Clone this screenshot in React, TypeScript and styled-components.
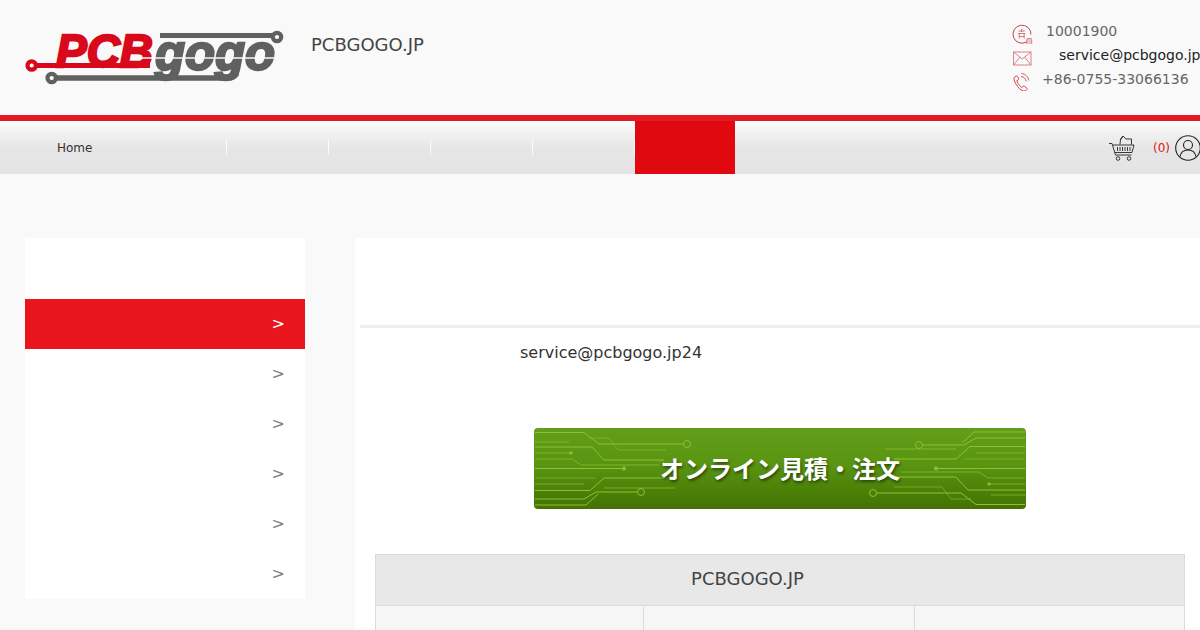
import styled, { createGlobalStyle } from 'styled-components';

const GlobalStyle = createGlobalStyle`
    html, body {
        margin: 0;
        padding: 0;
        height: 630px;
        overflow: hidden;
        background: #f9f9f9;
        font-family: "DejaVu Sans", sans-serif;
    }
`;

const Page = styled.div`
    width: 1200px;
    height: 630px;
    overflow: hidden;
    background: #f9f9f9;
`;

const Header = styled.header`
    height: 115px;
    display: flex;
    align-items: flex-start;
`;

const LogoBox = styled.div`
    width: 264px;
    height: 76px;
    margin: 18px 0 0 25px;
    svg {
        display: block;
    }
`;

const SiteTitle = styled.div`
    margin: 34px 0 0 22px;
    font-size: 18px;
    line-height: 21px;
    color: #444;
`;

const Contact = styled.div`
    margin: 19px 0 0 auto;
    width: 188px;
    overflow: hidden;
    display: grid;
    grid-auto-rows: 24px;
`;

const ContactRow = styled.div<{ $indent: number; $dark?: boolean }>`
    display: flex;
    align-items: center;
    white-space: nowrap;
    font-size: 14px;
    color: ${({ $dark }) => ($dark ? '#222' : '#666')};
    span {
        margin-left: ${({ $indent }) => $indent}px;
    }
    svg {
        flex: none;
    }
`;

const RedBar = styled.div`
    height: 6px;
    background: #e01b24;
`;

const Nav = styled.nav`
    height: 53px;
    display: flex;
    background: linear-gradient(#fbfcfc 0%, #f2f2f2 22%, #e6e6e6 50%, #e4e4e4 100%);
`;

const NavItem = styled.div<{ $width: number; $active?: boolean }>`
    width: ${({ $width }) => $width}px;
    flex: none;
    position: relative;
    display: flex;
    align-items: center;
    justify-content: ${({ $active }) => ($active ? 'center' : 'flex-start')};
    padding-left: ${({ $active, $width }) => ($active || $width < 200 ? 0 : 57)}px;
    box-sizing: border-box;
    font-size: 12px;
    color: #333;
    background: ${({ $active }) => ($active ? '#e0090f' : 'transparent')};
    ${({ $active }) =>
        !$active &&
        `
        &:after {
            content: '';
            position: absolute;
            right: 0;
            top: 19px;
            width: 1px;
            height: 15px;
            background: #fbfbfb;
        }
    `}
`;

const NavTools = styled.div`
    margin-left: auto;
    margin-right: -1px;
    display: flex;
    align-items: center;
    svg {
        display: block;
    }
`;

const CartCount = styled.span`
    margin-left: 17px;
    margin-right: 5px;
    font-size: 12px;
    color: #e0151c;
`;

const Body = styled.div`
    display: flex;
    align-items: flex-start;
    padding: 64px 0 0 25px;
`;

const Sidebar = styled.aside`
    width: 280px;
    height: 361px;
    flex: none;
    padding-top: 61px;
    box-sizing: border-box;
    background: #fff;
`;

const SideRow = styled.div<{ $active?: boolean }>`
    height: 50px;
    display: flex;
    align-items: center;
    justify-content: flex-end;
    padding: 0 20px 2px 0;
    box-sizing: border-box;
    font-size: 16px;
    color: ${({ $active }) => ($active ? '#fff' : '#808080')};
    background: ${({ $active }) => ($active ? '#e9151c' : 'transparent')};
`;

const Main = styled.main`
    width: 845px;
    height: 392px;
    flex: none;
    margin-left: 50px;
    background: #fff;
`;

const MainHead = styled.div`
    height: 87px;
    margin-left: 5px;
    border-bottom: 3px solid #eeeeee;
`;

const Mail = styled.p`
    margin: 15px 0 0 165px;
    font-size: 16px;
    line-height: 19px;
    color: #333;
`;

const Banner = styled.div`
    position: relative;
    width: 492px;
    height: 81px;
    margin: 66px 0 0 179px;
    border-radius: 4px;
    overflow: hidden;
    display: flex;
    align-items: center;
    justify-content: center;
    padding-bottom: 2px;
    box-sizing: border-box;
    background: linear-gradient(#629e1a 0%, #5a9512 45%, #4c8208 75%, #437204 100%);
    svg {
        position: absolute;
        left: 0;
        top: 0;
    }
`;

const BannerText = styled.span`
    position: relative;
    font-family: "Noto Sans CJK JP", sans-serif;
    font-weight: 700;
    font-size: 24px;
    line-height: 30px;
    color: #fff;
    text-shadow: 1px 2px 3px rgba(0, 0, 0, 0.5);
`;

const Table = styled.div`
    width: 810px;
    margin: 45px 0 0 20px;
    border: 1px solid #dcdcdc;
    border-bottom: none;
    box-sizing: border-box;
`;

const TableHead = styled.div`
    height: 51px;
    display: flex;
    align-items: center;
    justify-content: center;
    padding: 0 65px 3px 0;
    box-sizing: border-box;
    font-size: 18px;
    color: #444;
    background: #e8e8e8;
    border-bottom: 1px solid #dcdcdc;
`;

const TableRow = styled.div`
    display: grid;
    grid-template-columns: 267px 271px 1fr;
    height: 60px;
    background: #f6f6f6;
`;

const TableCell = styled.div`
    border-left: 1px solid #dcdcdc;
    &:first-child {
        border-left: none;
    }
`;

const Logo = () => (
    <svg width="264" height="76" viewBox="25 18 264 76">
        <g fill="#d9091c" stroke="#d9091c">
            <text
                x="56"
                y="67"
                fontFamily="Liberation Sans"
                fontStyle="italic"
                fontWeight="700"
                fontSize="46"
                textLength="97"
                lengthAdjust="spacingAndGlyphs"
                strokeWidth="2.4"
            >
                PCB
            </text>
            <path d="M36 65.500H150" strokeWidth="5" fill="none" />
            <circle cx="31.700" cy="65.500" r="4.200" fill="#fff" strokeWidth="4.200" />
        </g>
        <g fill="#606060" stroke="#606060">
            <text
                x="155"
                y="70"
                fontFamily="Liberation Sans"
                fontStyle="italic"
                fontWeight="700"
                fontSize="50"
                textLength="120"
                lengthAdjust="spacingAndGlyphs"
                strokeWidth="2.4"
            >
                gogo
            </text>
            <path d="M160 35.500H272" strokeWidth="5" fill="none" />
            <circle cx="277" cy="37" r="4.200" fill="#fff" strokeWidth="4.200" />
            <path d="M56 78H228q6 0 9-5" strokeWidth="5.500" fill="none" />
            <circle cx="51.700" cy="78" r="4.200" fill="#fff" strokeWidth="4.200" />
        </g>
        <path d="M131 58H276" stroke="#f9f9f9" strokeWidth="1.400" fill="none" />
    </svg>
);

const ServiceIcon = () => (
    <svg width="22" height="26" viewBox="0.8 -5.500 22 26" fill="none" stroke="#c4434c" strokeWidth="1">
        <path d="M15.500 18.400A9 9 0 1 1 19.800 11" />
        <path d="M7.500 7.500h6M10.500 5.500v3M7 10h7M8 10v5M13 10v5M8 13h5" strokeWidth="0.700" />
        <rect x="15.500" y="15" width="5" height="6" rx="1" fill="#eec6c8" strokeWidth="0.600" />
    </svg>
);

const MailIcon = () => (
    <svg width="22" height="22" viewBox="0 0 22 22" fill="none" stroke="#d5666c" strokeWidth="0.800">
        <rect x="1.500" y="8" width="17.500" height="13" />
        <path d="M1.500 8 10.200 15 19 8M1.500 21 8 13M19 21 12.500 13" />
    </svg>
);

const PhoneIcon = () => (
    <svg width="22" height="24" viewBox="0 0 22 24" fill="none" stroke="#c9343c" strokeWidth="0.900">
        <g transform="translate(-1 2.500)">
            <path d="M5 6.500c-2 1-2.500 2.500-1.500 5 1.500 4 4 7.500 7.500 9.500 2 1 4 .5 5-1 .4-.7.2-1.200-.4-1.600l-2.300-1.600c-.6-.4-1.100-.3-1.500.2l-.8 1c-2.500-1.200-4.300-4-5.200-6.800l1.200-.6c.6-.3.7-.8.500-1.400L6.600 7c-.3-.6-.9-.8-1.600-.5Z" />
            <path d="M10 7c2.800.2 4.800 2.200 5.200 5M10.500 4c3.800.3 6.800 3.200 7.300 7" strokeWidth="0.800" />
        </g>
    </svg>
);

const CartIcon = () => (
    <svg width="28" height="28" viewBox="0 0 28 28" fill="none" stroke="#222" strokeWidth="0.900">
        <path d="M1 9.500h3l3.500 11.500h16M5 11h21l-2 7.500H7" />
        <path d="M9.500 13v4M12 13v4M14.500 13v4M17 13v4M19.500 13v4M22 13v4" />
        <circle cx="10" cy="24.500" r="1.800" />
        <circle cx="21" cy="24.500" r="1.800" />
        <path d="M12 10.500 12.500 5l2.500-3 3 3h5.500v5.500M15 2l-2 3.500" />
    </svg>
);

const UserIcon = () => (
    <svg width="26" height="26" viewBox="0 0 26 26" fill="none" stroke="#222" strokeWidth="1.100">
        <circle cx="13" cy="13" r="12.300" />
        <circle cx="13" cy="10" r="4.500" />
        <path d="M5 21.500c.8-4.500 4-6.500 8-6.500s7.200 2 8 6.500" />
    </svg>
);

const TraceSet = () => (
    <g fill="none" stroke="#8cc232" strokeWidth="1">
        <path d="M1 4.500H50L65 16H149" />
        <circle cx="153" cy="16" r="3.500" />
        <path d="M55 10H75L84 22H132" strokeOpacity="0.6" />
        <path d="M1 14H35" strokeOpacity="0.7" />
        <path d="M1 19H58L70 32H130" />
        <path d="M1 25H38" strokeOpacity="0.7" />
        <path d="M1 31H38L47 37H125" strokeOpacity="0.7" />
        <path d="M1 40.500H90" />
        <circle cx="90" cy="40.500" r="1.600" fill="#8cc232" />
        <circle cx="37" cy="25" r="1.200" fill="#8cc232" />
        <path d="M1 50H62" strokeOpacity="0.6" />
        <path d="M1 56H50" strokeOpacity="0.7" />
        <path d="M1 62.500H56L70 50H132" />
        <path d="M70 60H141" strokeOpacity="0.7" />
        <path d="M1 71H50L62 64H103" />
        <circle cx="107" cy="64" r="3.500" />
        <path d="M1 77H52L64 66" />
    </g>
);

const BannerArt = () => (
    <svg width="492" height="81" viewBox="0 0 492 81">
        <TraceSet />
        <g transform="rotate(180 246 40.500)">
            <TraceSet />
        </g>
    </svg>
);

const navWidths = [227, 102, 102, 102, 102];
const sideRows = [true, false, false, false, false, false];

export default function App() {
    return (
        <Page>
            <GlobalStyle />
            <Header>
                <LogoBox>
                    <Logo />
                </LogoBox>
                <SiteTitle>PCBGOGO.JP</SiteTitle>
                <Contact>
                    <ContactRow $indent={12}>
                        <ServiceIcon />
                        <span>10001900</span>
                    </ContactRow>
                    <ContactRow $indent={25} $dark>
                        <MailIcon />
                        <span>service@pcbgogo.jp</span>
                    </ContactRow>
                    <ContactRow $indent={8}>
                        <PhoneIcon />
                        <span>+86-0755-33066136</span>
                    </ContactRow>
                </Contact>
            </Header>
            <RedBar />
            <Nav>
                {navWidths.map((w, i) => (
                    <NavItem key={i} $width={w}>
                        {i === 0 ? 'Home' : ''}
                    </NavItem>
                ))}
                <NavItem $width={100} $active />
                <NavTools>
                    <CartIcon />
                    <CartCount>(0)</CartCount>
                    <UserIcon />
                </NavTools>
            </Nav>
            <Body>
                <Sidebar>
                    {sideRows.map((active, i) => (
                        <SideRow key={i} $active={active}>
                            &gt;
                        </SideRow>
                    ))}
                </Sidebar>
                <Main>
                    <MainHead />
                    <Mail>service@pcbgogo.jp24</Mail>
                    <Banner>
                        <BannerArt />
                        <BannerText>オンライン見積・注文</BannerText>
                    </Banner>
                    <Table>
                        <TableHead>PCBGOGO.JP</TableHead>
                        <TableRow>
                            <TableCell />
                            <TableCell />
                            <TableCell />
                        </TableRow>
                    </Table>
                </Main>
            </Body>
        </Page>
    );
}
